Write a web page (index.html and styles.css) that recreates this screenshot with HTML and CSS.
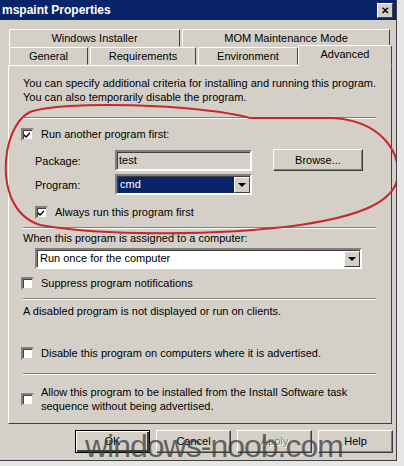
FILE: index.html
```html
<!DOCTYPE html>
<html lang="en">
<head>
    <meta charset="UTF-8">
    <title>mspaint Properties</title>
    <link rel="stylesheet" href="styles.css">
</head>
<body>
    <div class="window">
        <div class="titlebar">
            <span class="title">mspaint Properties</span>
            <span class="close">&#x2715;</span>
        </div>

        <div class="tabs">
            <div class="tab-row back">
                <div class="tab t-installer">Windows Installer</div>
                <div class="tab t-mom">MOM Maintenance Mode</div>
            </div>
            <div class="tab-row front">
                <div class="tab t-general">General</div>
                <div class="tab t-req">Requirements</div>
                <div class="tab t-env">Environment</div>
                <div class="tab t-adv active">Advanced</div>
            </div>
        </div>

        <div class="panel">
            <p class="intro">You can specify additional criteria for installing and running this program.<br>You can also temporarily disable the program.</p>
            <div class="sep s1"></div>

            <label class="check c-run"><span class="box checked"></span>Run another program first:</label>

            <div class="field f-package">
                <span class="label">Package:</span>
                <span class="textbox">test</span>
                <span class="button browse">Browse...</span>
            </div>
            <div class="field f-program">
                <span class="label">Program:</span>
                <span class="combo short"><span class="value selected">cmd</span><span class="arrow"></span></span>
            </div>

            <label class="check c-always"><span class="box checked"></span>Always run this program first</label>
            <div class="sep s2"></div>

            <p class="line l-when">When this program is assigned to a computer:</p>
            <span class="combo wide"><span class="value">Run once for the computer</span><span class="arrow"></span></span>

            <label class="check c-suppress"><span class="box"></span>Suppress program notifications</label>
            <div class="sep s3"></div>

            <p class="line l-disabled">A disabled program is not displayed or run on clients.</p>

            <label class="check c-disable"><span class="box"></span>Disable this program on computers where it is advertised.</label>
            <div class="sep s4"></div>

            <label class="check c-allow"><span class="box"></span>Allow this program to be installed from the Install Software task<br>sequence without being advertised.</label>
        </div>

        <div class="buttons">
            <span class="button default">OK</span>
            <span class="button">Cancel</span>
            <span class="button disabled">Apply</span>
            <span class="button">Help</span>
        </div>

        <!-- red marker drawn over the screenshot -->
        <svg class="scribble" width="404" height="250" viewBox="0 0 404 250">
            <path d="M 30,112 C 60,100 200,104 250,118 L 333,118 C 380,121 399,150 398,175 C 396,202 360,216 300,225 C 220,236 100,236 40,225 C 12,216 2,185 7,152 C 10,134 18,118 30,112"
                  fill="none" stroke="#c8282c" stroke-width="2"/>
        </svg>

        <div class="watermark">windows-noob.com</div>
    </div>
</body>
</html>
```

FILE: styles.css
```css
body {
    margin: 0;
    background-color: #e6e6e6;
    font-family: "Liberation Sans", Arial, sans-serif;
    font-size: 11px;
    color: #000;
}

.window {
    position: relative;
    width: 396px;
    height: 460px;
    background-color: #d4d0c8;
    border-right: 1px solid #404040;
    border-bottom: 1px solid #404040;
    overflow: hidden;
}

.titlebar {
    height: 20px;
    background-color: #0a246a;
    display: flex;
    align-items: center;
    justify-content: space-between;
    padding: 0 2px;
}

.title {
    color: white;
    font-weight: bold;
    font-size: 12px;
}

.close {
    width: 14px;
    height: 13px;
    background-color: #d4d0c8;
    border: 1px solid;
    border-color: #fff #404040 #404040 #fff;
    font-size: 10px;
    font-weight: bold;
    line-height: 13px;
    text-align: center;
    margin-right: 1px;
}

/* Tabs */
.tabs {
    margin-top: 9px;
    padding-left: 9px;
}

.tab-row {
    display: flex;
    height: 18px;
}

.tab {
    box-sizing: border-box;
    height: 18px;
    border: 1px solid;
    border-color: #fff #404040 transparent #fff;
    border-radius: 2px 2px 0 0;
    text-align: center;
    line-height: 17px;
    margin-right: 2px;
}

.t-installer { width: 171px; }
.t-mom { width: 208px; }
.t-general { width: 79px; }
.t-req { width: 106px; }
.t-env { width: 100px; }
.t-adv { width: 94px; }

.tab.active {
    position: relative;
    height: 21px;
    margin-top: -2px;
    margin-left: -2px;
    background-color: #d4d0c8;
    line-height: 16px;
    z-index: 1;
}

/* Panel */
.panel {
    box-sizing: border-box;
    width: 384px;
    height: 359px;
    margin-left: 8px;
    border: 1px solid;
    border-color: #fff #404040 #404040 #fff;
    padding: 10px 0 0 14px;
}

.intro, .line {
    margin: 0;
    line-height: 14px;
}

.sep {
    width: 353px;
    height: 0;
    border-top: 1px solid #808080;
    border-bottom: 1px solid #fff;
}

.s1 { margin-top: 13px; }
.s2 { margin-top: 8px; }
.s3 { margin-top: 8px; }
.s4 { margin-top: 13px; }

.check {
    display: flex;
    align-items: center;
    line-height: 14px;
}

.box {
    flex-shrink: 0;
    box-sizing: border-box;
    width: 13px;
    height: 13px;
    margin-left: -2px;
    margin-right: 7px;
    background-color: #fff;
    border: 2px solid;
    border-color: #808080 #d4d0c8 #d4d0c8 #808080;
    box-shadow: inset 1px 1px 0 #404040;
}

.box.checked {
    background: #fff url("data:image/svg+xml,%3Csvg xmlns='http://www.w3.org/2000/svg' width='9' height='9'%3E%3Cpath d='M1 4 L3 6 L7 2 L7 4 L3 8 L1 6 Z' fill='%23000'/%3E%3C/svg%3E") no-repeat 0 0;
}

.c-run { margin-top: 8px; }
.c-always { margin-top: 10px; padding-left: 14px; }
.c-suppress { margin-top: 7px; }
.c-disable { margin-top: 28px; }
.c-allow { margin-top: 10px; }

.field {
    display: flex;
    align-items: center;
    padding-left: 12px;
}

.f-package { margin-top: 9px; }
.f-program { margin-top: 3px; }

.label {
    width: 80px;
}

.textbox {
    box-sizing: border-box;
    width: 137px;
    height: 21px;
    padding-left: 2px;
    border: 2px solid;
    border-color: #808080 #fff #fff #808080;
    box-shadow: inset 1px 1px 0 #404040;
    line-height: 16px;
}

.combo {
    box-sizing: border-box;
    display: flex;
    height: 21px;
    background-color: #fff;
    border: 2px solid;
    border-color: #808080 #fff #fff #808080;
    box-shadow: inset 1px 1px 0 #404040;
}

.combo.short { width: 137px; }

.combo.wide {
    width: 327px;
    margin-top: 3px;
    margin-left: 12px;
}

.value {
    flex: 1;
    padding-left: 2px;
    margin: 1px 0 0 1px;
    line-height: 15px;
}

.value.selected {
    background-color: #0a246a;
    color: white;
}

.arrow {
    box-sizing: border-box;
    width: 16px;
    height: 16px;
    margin-top: 1px;
    background-color: #d4d0c8;
    border: 1px solid;
    border-color: #fff #404040 #404040 #fff;
    display: flex;
    align-items: center;
    justify-content: center;
}

.arrow::after {
    content: "";
    border-left: 4px solid transparent;
    border-right: 4px solid transparent;
    border-top: 4px solid #000;
}

.button {
    box-sizing: border-box;
    width: 75px;
    height: 23px;
    background-color: #d4d0c8;
    border: 1px solid;
    border-color: #fff #404040 #404040 #fff;
    box-shadow: inset -1px -1px 0 #808080;
    text-align: center;
    line-height: 20px;
}

.browse {
    width: 90px;
    height: 22px;
    margin-left: 21px;
    margin-top: -1px;
}

.l-when { margin-top: 2px; }
.l-disabled { margin-top: 4px; }

/* Bottom buttons */
.buttons {
    display: flex;
    gap: 6px;
    margin-top: 6px;
    padding-left: 75px;
}

.button.default {
    border: 1px solid #000;
    box-shadow: inset 1px 1px 0 #fff, inset -2px -2px 0 #404040;
}

.button.disabled {
    color: #808080;
    text-shadow: 1px 1px 0 #fff;
}

/* Overlays from the original screenshot */
.scribble {
    position: absolute;
    left: 0;
    top: 0;
    pointer-events: none;
}

.watermark {
    position: absolute;
    left: 85px;
    top: 428px;
    font-size: 32px;
    color: rgba(60, 60, 60, 0.75);
    letter-spacing: -1px;
    pointer-events: none;
}
```
